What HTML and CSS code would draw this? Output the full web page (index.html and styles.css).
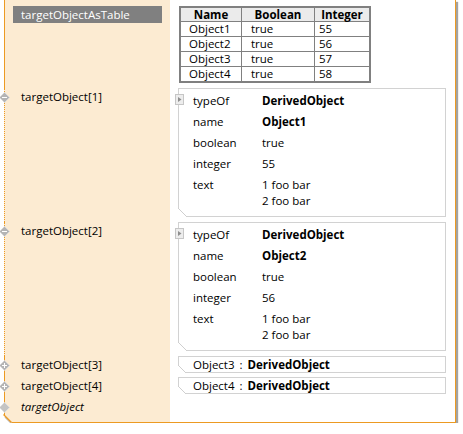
FILE: index.html
```html
<!DOCTYPE html>
<html>
<head>
<meta charset="utf-8">
<link rel="stylesheet" href="styles.css">
</head>
<body>
<div class="frame">
  <div class="lcell">
    <div class="tag">targetObjectAsTable</div>
  </div>
  <div class="rcell">
    <table class="tbl">
      <tr><th class="c1">Name</th><th class="c2">Boolean</th><th class="c3">Integer</th></tr>
      <tr><td class="c1">Object1</td><td class="c2">true</td><td class="c3">55</td></tr>
      <tr><td class="c1">Object2</td><td class="c2">true</td><td class="c3">56</td></tr>
      <tr><td class="c1">Object3</td><td class="c2">true</td><td class="c3">57</td></tr>
      <tr><td class="c1">Object4</td><td class="c2">true</td><td class="c3">58</td></tr>
    </table>
  </div>

  <div class="lcell dot">
    <div class="lbl"><svg class="dia" width="11" height="11" viewBox="0 0 11 11"><path d="M5.5 0.5 L10.5 5.5 L5.5 10.5 L0.5 5.5Z" fill="#b4b4b4" stroke="#d8d8d8"/><rect x="3" y="5" width="5" height="1" fill="#fff"/></svg>targetObject[1]</div>
  </div>
  <div class="rcell">
    <div class="card">
      <svg class="exp" width="9" height="11" viewBox="0 0 9 11"><rect x="0.5" y="0.5" width="8" height="10" fill="#ededed" stroke="#c6c6c6"/><path d="M3 3 L6.5 5.5 L3 8Z" fill="#8e8e8e"/></svg>
      <div class="row"><span class="k">typeOf</span><b>DerivedObject</b></div>
      <div class="row"><span class="k">name</span><b>Object1</b></div>
      <div class="row"><span class="k">boolean</span><span>true</span></div>
      <div class="row"><span class="k">integer</span><span>55</span></div>
      <div class="row"><span class="k">text</span><span>1 foo bar<br>2 foo bar</span></div>
    </div>
  </div>

  <div class="lcell dot">
    <div class="lbl"><svg class="dia" width="11" height="11" viewBox="0 0 11 11"><path d="M5.5 0.5 L10.5 5.5 L5.5 10.5 L0.5 5.5Z" fill="#b4b4b4" stroke="#d8d8d8"/><rect x="3" y="5" width="5" height="1" fill="#fff"/></svg>targetObject[2]</div>
  </div>
  <div class="rcell">
    <div class="card">
      <svg class="exp" width="9" height="11" viewBox="0 0 9 11"><rect x="0.5" y="0.5" width="8" height="10" fill="#ededed" stroke="#c6c6c6"/><path d="M3 3 L6.5 5.5 L3 8Z" fill="#8e8e8e"/></svg>
      <div class="row"><span class="k">typeOf</span><b>DerivedObject</b></div>
      <div class="row"><span class="k">name</span><b>Object2</b></div>
      <div class="row"><span class="k">boolean</span><span>true</span></div>
      <div class="row"><span class="k">integer</span><span>56</span></div>
      <div class="row"><span class="k">text</span><span>1 foo bar<br>2 foo bar</span></div>
    </div>
  </div>

  <div class="lcell">
    <div class="lbl"><svg class="dia" width="11" height="11" viewBox="0 0 11 11"><path d="M5.5 0.5 L10.5 5.5 L5.5 10.5 L0.5 5.5Z" fill="#b4b4b4" stroke="#d8d8d8"/><rect x="3" y="5" width="5" height="1" fill="#fff"/><rect x="5" y="3" width="1" height="5" fill="#fff"/></svg>targetObject[3]</div>
  </div>
  <div class="rcell">
    <div class="card single"><span>Object3</span><span class="colon">:</span><b>DerivedObject</b></div>
  </div>

  <div class="lcell">
    <div class="lbl"><svg class="dia" width="11" height="11" viewBox="0 0 11 11"><path d="M5.5 0.5 L10.5 5.5 L5.5 10.5 L0.5 5.5Z" fill="#b4b4b4" stroke="#d8d8d8"/><rect x="3" y="5" width="5" height="1" fill="#fff"/><rect x="5" y="3" width="1" height="5" fill="#fff"/></svg>targetObject[4]</div>
  </div>
  <div class="rcell">
    <div class="card single"><span>Object4</span><span class="colon">:</span><b>DerivedObject</b></div>
  </div>

  <div class="lcell">
    <div class="lbl it"><svg class="dia" width="11" height="11" viewBox="0 0 11 11"><path d="M5.5 0.5 L10.5 5.5 L5.5 10.5 L0.5 5.5Z" fill="#c4c4c4" stroke="#dedede"/></svg>targetObject</div>
  </div>
  <div class="rcell"></div>

  <svg class="corner" width="14" height="16" viewBox="0 0 14 16"><path d="M-1 2 L8.5 11.5 L9 16 L-1 16Z" fill="#fff"/><path d="M2 6 L9 13" stroke="#bdbdbd" stroke-width="1.5"/><path d="M0.5 3.5 L8.5 11.5" stroke="#ec9a22" stroke-width="1.2"/></svg>
</div>
</body>
</html>
```

FILE: styles.css
```css
html, body {
  margin: 0;
  padding: 0;
  background: #fff;
}

body {
  font-family: "Open Sans", "Noto Sans", sans-serif;
  font-size: 11.5px;
  color: #000;
}

.frame {
  position: relative;
  margin-left: 4px;
  width: 452px;
  height: 423px;
  box-sizing: border-box;
  border-right: 1px solid #ec9a22;
  border-bottom: 1px solid #ec9a22;
  box-shadow: 2px 2px 1px #a3a3a3;
  display: grid;
  grid-template-columns: 166px 285px;
  grid-template-rows: 88px 134px 134px 21px 21px 24px;
}

.lcell {
  background: #fcebd2;
  border-left: 1px solid #ec9a22;
  box-sizing: border-box;
  padding-left: 16px;
}

.lcell.dot {
  border-left-style: dotted;
}

.rcell {
  background: #fff;
  padding: 0 9px 0 8px;
}

.tag {
  margin: 6px 0 0 -8px;
  width: 149px;
  height: 17px;
  box-sizing: border-box;
  padding-left: 8px;
  background: #808080;
  color: #fff;
  line-height: 17px;
}

.lbl {
  position: relative;
  margin-top: 1px;
  line-height: 16px;
}

.lbl.it {
  font-style: italic;
}

.dia {
  position: absolute;
  left: -22px;
  top: 3px;
}

.tbl {
  border-collapse: separate;
  border-spacing: 0;
  border: 2px solid #808080;
  margin: 6px 0 0 1px;
}

.tbl th,
.tbl td {
  box-sizing: border-box;
  padding: 0;
  border-right: 1px solid #808080;
  border-bottom: 1px solid #808080;
  text-align: left;
  line-height: 14px;
  height: 15px;
  white-space: nowrap;
}

.tbl th {
  background: #ebebeb;
  font-weight: bold;
  text-align: center;
  line-height: 13px;
  height: 14px;
}

.tbl tr:last-child td {
  border-bottom: none;
  height: 14px;
}

.tbl .c1 { width: 61px; }
.tbl .c2 { width: 73px; }
.tbl .c3 { width: 54px; border-right: none; }

.tbl td.c1 { padding-left: 8px; }
.tbl td.c2 { padding-left: 9px; }
.tbl td.c3 { padding-left: 4px; }

.card {
  position: relative;
  border: 1px solid #d2d2d2;
  background: #fff;
  padding: 1px 0 5px 14px;
}

.card::after {
  content: "";
  position: absolute;
  left: -1px;
  bottom: -1px;
  width: 9px;
  height: 9px;
  background: linear-gradient(to top right, #fff calc(50% - 0.6px), #cfcfcf calc(50% - 0.6px), #cfcfcf calc(50% + 0.6px), transparent calc(50% + 0.6px));
}

.exp {
  position: absolute;
  left: -4px;
  top: 5px;
}

.row {
  display: flex;
  padding: 3px 0 2px;
  line-height: 16px;
}

.k {
  width: 69px;
  flex: none;
}

.card.single {
  padding: 0 0 0 14px;
  height: 15px;
  line-height: 15px;
}

.card.single::after {
  width: 8px;
  height: 8px;
}

.colon {
  margin: 0 5px 0 5px;
}

.corner {
  position: absolute;
  left: -1px;
  top: 411px;
}
```
